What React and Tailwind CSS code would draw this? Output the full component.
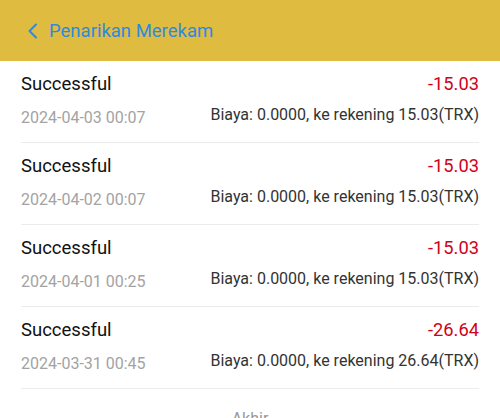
import React from "react";

const rows = [
  { date: "2024-04-03 00:07", amount: "-15.03", to: "15.03" },
  { date: "2024-04-02 00:07", amount: "-15.03", to: "15.03" },
  { date: "2024-04-01 00:25", amount: "-15.03", to: "15.03" },
  { date: "2024-03-31 00:45", amount: "-26.64", to: "26.64" },
];

export default function App() {
  return (
    <div className="w-[500px] h-[418px] overflow-hidden bg-white" style={{ fontFamily: "Roboto, 'Noto Sans', sans-serif" }}>
      <div className="h-[61px] bg-[#dfbc3f] flex items-center pl-[27px]">
        <svg width="11" height="16" viewBox="0 0 11 16" className="mr-[11px]">
          <polyline points="9,1.5 2.5,8 9,14.5" fill="none" stroke="#2d8ae0" strokeWidth="2" strokeLinecap="round" strokeLinejoin="round" />
        </svg>
        <span className="text-[18.5px] leading-[24px] text-[#2d8ae0]">Penarikan Merekam</span>
      </div>
      <div className="px-[21px]">
        {rows.map((r, i) => (
          <div key={i} className="h-[82px] border-b border-[#ececec] flex justify-between pt-[11px]">
            <div className="flex flex-col">
              <span className="text-[18.5px] leading-[24px] text-[#111]">Successful</span>
              <span className="mt-[12px] text-[16px] leading-[20px] text-[#a3a3a3]">{r.date}</span>
            </div>
            <div className="flex flex-col items-end">
              <span className="text-[18.3px] leading-[24px] text-[#d0021b]">{r.amount}</span>
              <span className="mt-[9px] text-[16px] leading-[20px] text-[#333]">Biaya: 0.0000, ke rekening {r.to}(TRX)</span>
            </div>
          </div>
        ))}
      </div>
      <div className="pt-[20px] text-center text-[16px] leading-[20px] text-[#999]">Akhir</div>
    </div>
  );
}
